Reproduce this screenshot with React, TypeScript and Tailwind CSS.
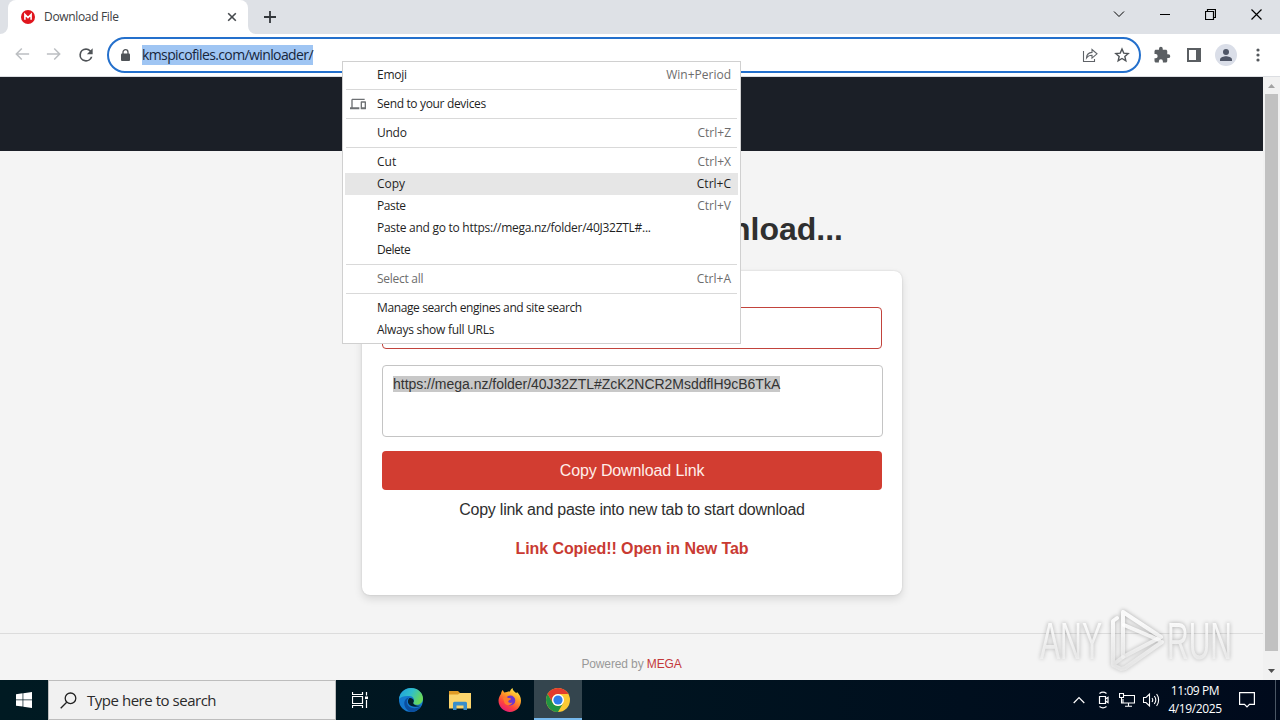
import type { ReactNode } from "react";
import { clsx } from "clsx";

type MenuEntry =
  | { type: "separator" }
  | {
      type: "item";
      label: string;
      shortcut?: string;
      active?: boolean;
      disabled?: boolean;
      icon?: ReactNode;
      tracking?: string;
    };

const menu: MenuEntry[] = [
  { type: "item", label: "Emoji", shortcut: "Win+Period" },
  { type: "separator" },
  { type: "item", label: "Send to your devices", icon: <DevicesIcon />, tracking: "tracking-[-0.34px]" },
  { type: "separator" },
  { type: "item", label: "Undo", shortcut: "Ctrl+Z" },
  { type: "separator" },
  { type: "item", label: "Cut", shortcut: "Ctrl+X", tracking: "tracking-normal" },
  { type: "item", label: "Copy", shortcut: "Ctrl+C", active: true, tracking: "tracking-normal" },
  { type: "item", label: "Paste", shortcut: "Ctrl+V", tracking: "tracking-[-0.4px]" },
  { type: "item", label: "Paste and go to https://mega.nz/folder/40J32ZTL#..." },
  { type: "item", label: "Delete", tracking: "tracking-[-0.5px]" },
  { type: "separator" },
  { type: "item", label: "Select all", shortcut: "Ctrl+A", disabled: true },
  { type: "separator" },
  { type: "item", label: "Manage search engines and site search", tracking: "tracking-[-0.39px]" },
  { type: "item", label: "Always show full URLs" },
];

function DevicesIcon() {
  return (
    <svg className="h-4 w-4" viewBox="0 0 24 24" fill="#6d7073">
      <path d="M4 6h18V4H4c-1.100 0-2 .9-2 2v11H0v3h14v-3H4V6zm19 2h-6c-.55 0-1 .45-1 1v10c0 .55.45 1 1 1h6c.55 0 1-.45 1-1V9c0-.55-.45-1-1-1zm-1 9h-4v-7h4v7z" />
    </svg>
  );
}

function TabStrip() {
  return (
    <div className="flex h-[34px] bg-[#dee1e6] pl-2">
      <div className="relative flex w-60 items-center rounded-t-lg bg-white pl-[13px] pr-[11px]">
        <svg className="absolute -left-2 bottom-0 h-2 w-2" viewBox="0 0 8 8">
          <path d="M8 0v8H0a8 8 0 0 0 8-8z" fill="#fff" />
        </svg>
        <svg className="absolute -right-2 bottom-0 h-2 w-2" viewBox="0 0 8 8">
          <path d="M0 0v8h8a8 8 0 0 1-8-8z" fill="#fff" />
        </svg>
        <svg className="h-[14px] w-[14px]" viewBox="0 0 14 14">
          <circle cx="7" cy="7" r="7" fill="#e0151d" />
          <path d="M3.900 9.800V4.400L7 7.500l3.100-3.100v5.400" fill="none" stroke="#fff" strokeWidth="1.600" />
        </svg>
        <span className="ml-[9px] flex-1 whitespace-nowrap text-xs tracking-[-0.33px] text-[#3c4043]">Download File</span>
        <svg className="h-[10px] w-[10px]" viewBox="0 0 10 10" stroke="#45494d" strokeWidth="1.600">
          <path d="M1.200 1.200l7.600 7.600M8.800 1.200L1.200 8.800" />
        </svg>
      </div>
      <div className="flex w-11 items-center justify-center">
        <svg className="h-3 w-3" viewBox="0 0 12 12" stroke="#33373b" strokeWidth="1.800">
          <path d="M6 0v12M0 6h12" />
        </svg>
      </div>
      <div className="ml-auto flex pb-[6px] text-black">
        <div className="flex w-[46px] items-center justify-center">
          <svg className="h-3 w-3" viewBox="0 0 12 12" fill="none" stroke="currentColor">
            <path d="M1 3.500l5 5 5-5" />
          </svg>
        </div>
        <div className="flex w-[46px] items-center justify-center">
          <div className="h-px w-[10px] bg-black" />
        </div>
        <div className="flex w-[46px] items-center justify-center">
          <svg className="mr-px h-[11px] w-[11px]" viewBox="0 0 11 11" fill="none" stroke="currentColor" strokeWidth="1.200">
            <path d="M.5 2.500h8v8h-8zM2.500 2.500v-2h8v8h-2" />
          </svg>
        </div>
        <div className="flex w-[46px] items-center justify-center">
          <svg className="mr-px h-[11px] w-[11px]" viewBox="0 0 11 11" stroke="currentColor" strokeWidth="1.200">
            <path d="M.5.500l10 10M10.500.500l-10 10" />
          </svg>
        </div>
      </div>
    </div>
  );
}

function Toolbar() {
  return (
    <div className="flex h-[43px] items-center border-b border-[#dcdee2] bg-white pl-[13px]">
      <div className="flex gap-[14px]">
        <svg className="h-[18px] w-[18px]" viewBox="0 0 24 24" fill="#bcbfc2">
          <path d="M21.500 11H6.830l5.590-5.590L11 4l-8 8 8 8 1.410-1.410L6.830 13H21.500v-2z" />
        </svg>
        <svg className="h-[18px] w-[18px]" viewBox="0 0 24 24" fill="#bcbfc2">
          <path d="M13 4l-1.410 1.410L17.170 11H2.500v2h14.670l-5.580 5.590L13 20l8-8z" />
        </svg>
        <svg className="h-5 w-5 -ml-px" viewBox="0 0 24 24" fill="#4f5357">
          <path d="M17.650 6.350A7.960 7.960 0 0 0 12 4a8 8 0 1 0 7.730 10h-2.080A6 6 0 1 1 12 6c1.660 0 3.140.69 4.220 1.780L13 11h7V4l-2.350 2.350z" />
        </svg>
      </div>
      <div className="ml-[11px] flex h-9 w-[1034px] items-center rounded-full border-2 border-[#2470cc] pl-[11px] pr-[9px]">
        <svg className="h-[13px] w-[11px]" viewBox="0 0 11 13">
          <rect x="1" y="4.500" width="9" height="7.500" rx="1" fill="#505458" />
          <path d="M3 5V3.200a2.500 2.500 0 0 1 5 0V5" fill="none" stroke="#505458" strokeWidth="1.300" />
        </svg>
        <span className="ml-[11px] h-5 whitespace-nowrap bg-[#9fc5f3] text-sm leading-5 tracking-[-0.61px] text-[#16263c]">
          kmspicofiles.com/winloader/
        </span>
        <div className="ml-auto flex items-center gap-4">
          <svg className="h-4 w-4" viewBox="0 0 16 16" fill="none" stroke="#5f6368" strokeWidth="1.100">
            <path d="M1.500 4v10.500h11V12M4.500 11c.2-3.600 2-5.400 5.500-5.600V2.500l5 4.300-5 4.300V8.300c-2.600 0-4.200.8-5.500 2.700z" />
          </svg>
          <svg className="h-4 w-4" viewBox="0 0 16 16" fill="none" stroke="#4f5357" strokeWidth="1.400">
            <path d="M8 2l1.750 4.100 4.450.4-3.370 2.930 1 4.370L8 11.480 4.170 13.800l1-4.370L1.800 6.500l4.450-.4z" />
          </svg>
        </div>
      </div>
      <div className="ml-3 flex items-center">
        <svg className="h-[18px] w-[18px]" viewBox="0 0 24 24" fill="#5a5e62">
          <path d="M20.500 11H19V7c0-1.100-.9-2-2-2h-4V3.500a2.500 2.500 0 0 0-5 0V5H4c-1.100 0-2 .9-2 2v3.800h1.500a2.700 2.700 0 0 1 0 5.400H2V20c0 1.100.9 2 2 2h3.800v-1.500a2.700 2.700 0 0 1 5.400 0V22H17c1.100 0 2-.9 2-2v-4h1.500a2.500 2.500 0 0 0 0-5z" />
        </svg>
        <svg className="ml-4 h-[14px] w-[14px]" viewBox="0 0 14 14">
          <path d="M0 0h14v14H0zM2 2v10h7V2z" fill="#5a5e62" fillRule="evenodd" />
        </svg>
        <div className="ml-[14px] h-[22px] w-[22px] rounded-full bg-[#dadee8]">
          <svg className="h-[22px] w-[22px]" viewBox="0 0 22 22" fill="#4e5566">
            <circle cx="11" cy="8" r="3" />
            <path d="M5 17v-1.500c0-2.200 4-3.300 6-3.300s6 1.100 6 3.300V17z" />
          </svg>
        </div>
        <svg className="ml-[19px] h-[14px] w-1" viewBox="0 0 4 14" fill="#55595d">
          <circle cx="2" cy="2" r="1.600" />
          <circle cx="2" cy="7" r="1.600" />
          <circle cx="2" cy="12" r="1.600" />
        </svg>
      </div>
    </div>
  );
}

function Page() {
  return (
    <div className="flex h-[603px] bg-[#f4f4f4]">
      <div className="flex w-[1263px] flex-col font-['Liberation_Sans',Arial,sans-serif]">
        <div className="h-[74px] bg-[#1b1f27]" />
        <h1 className="mt-[60px] pr-[420px] text-right text-[32px] font-bold leading-9 text-[#2f2f2f]">Download...</h1>
        <div className="ml-[362px] mt-[24px] flex h-[324px] w-[540px] flex-col rounded-lg bg-white px-5 pt-[36px] text-center shadow-[0_4px_8px_rgba(0,0,0,0.12),0_0_2px_rgba(0,0,0,0.15)]">
          <div className="h-[42px] rounded border border-[#c2433c]" />
          <div className="mt-4 h-[72px] w-[501px] rounded border border-[#c4c4c4] px-[10px] pt-[10px] text-left">
            <span className="block h-4 w-fit whitespace-nowrap bg-[#c8c8c8] text-sm leading-4 tracking-[-0.02px] text-[#333]">
              https://mega.nz/folder/40J32ZTL#ZcK2NCR2MsddflH9cB6TkA
            </span>
          </div>
          <div className="mt-[14px] h-[39px] rounded bg-[#d23d31] text-base leading-[39px] tracking-[-0.12px] text-[#ffeee9]">
            Copy Download Link
          </div>
          <p className="mt-2 text-base leading-6 tracking-[-0.24px] text-[#2f2f2f]">Copy link and paste into new tab to start download</p>
          <p className="mt-[15px] text-base font-bold leading-6 tracking-[-0.08px] text-[#c93a32]">Link Copied!! Open in New Tab</p>
        </div>
        <div className="mt-[38px] border-t border-[#dcdcdc] pt-[22px] text-center text-xs leading-4 tracking-[-0.12px] text-[#999]">
          Powered by <span className="text-[#c4383a]">MEGA</span>
        </div>
      </div>
      <div className="flex w-[17px] flex-col items-center bg-[#f1f1f1]">
        <svg className="h-[17px] w-[17px]" viewBox="0 0 17 17">
          <path d="M5 11l3.500-4L12 11z" fill="#a3a3a3" />
        </svg>
        <div className="h-[557px] w-[13px] bg-[#c1c1c1]" />
        <svg className="mt-auto h-[17px] w-[17px]" viewBox="0 0 17 17">
          <path d="M5 6l3.500 4L12 6z" fill="#505050" />
        </svg>
      </div>
    </div>
  );
}

function ContextMenu() {
  return (
    <div className="absolute left-[342px] top-[61px] h-[283px] w-[399px] border border-[#d0d0d0] bg-white px-[2px] py-[2px] text-xs text-[#1f1f1f]">
      {menu.map((entry, i) =>
        entry.type === "separator" ? (
          <div key={i} className="mx-[1px] h-[7px] pt-[3px]">
            <div className="h-px bg-[#d9d9d9]" />
          </div>
        ) : (
          <div key={i} className={clsx("flex h-[22px] items-center pr-[7px]", entry.active && "bg-[#e6e6e6]")}>
            <div className="w-8 pl-[5px]">{entry.icon}</div>
            <span
              className={clsx("flex-1 whitespace-nowrap", entry.tracking ?? "tracking-[-0.27px]", entry.disabled && "text-[#6d6d6d]")}
            >
              {entry.label}
            </span>
            <span className={entry.active ? "text-[#1f1f1f]" : "text-[#6d6d6d]"}>{entry.shortcut}</span>
          </div>
        ),
      )}
    </div>
  );
}

function Watermark() {
  return (
    <svg className="absolute left-[1030px] top-[602px] h-[78px] w-[230px] drop-shadow-[0_0_2px_rgba(0,0,0,0.35)]" viewBox="0 0 230 78">
      <defs>
        <linearGradient id="fade" gradientUnits="userSpaceOnUse" x1="0" y1="20" x2="0" y2="66">
          <stop offset="0" stopColor="#fff" stopOpacity="0.9" />
          <stop offset="1" stopColor="#f0f0f0" stopOpacity="0.6" />
        </linearGradient>
      </defs>
      <g fill="url(#fade)" fontFamily="Liberation Sans Narrow, Liberation Sans, sans-serif" fontSize="51">
        <text x="10" y="57" textLength="62" lengthAdjust="spacingAndGlyphs">ANY</text>
        <text x="137" y="57" textLength="65" lengthAdjust="spacingAndGlyphs">RUN</text>
      </g>
      <g fill="none" stroke="url(#fade)" strokeWidth="4" strokeLinejoin="round" strokeLinecap="round">
        <path d="M93 10v45l38-20z" />
        <path d="M87 16l-4 3v44l8 4 4-1 37-26M84 62l9-7M94 23l35 15" />
      </g>
    </svg>
  );
}

function EdgeIcon() {
  return (
    <svg className="h-6 w-6" viewBox="0 0 24 24">
      <defs>
        <linearGradient id="edgeTop" x1="0" y1="0" x2="1" y2="0.4">
          <stop offset="0" stopColor="#1e9ddd" />
          <stop offset="0.55" stopColor="#30bfca" />
          <stop offset="1" stopColor="#68d85a" />
        </linearGradient>
      </defs>
      <circle cx="12" cy="12" r="12" fill="#1479ce" />
      <path d="M0 11C1 4 6 0 12 0c7 0 12 5 12 10.500 0 4-3 6.300-6.500 6.300-3 0-4-1.300-3.200-2.300 2.200-3-.3-6.500-4-6.500C6 7.500 2 8.500 0 11z" fill="url(#edgeTop)" />
      <path d="M10.500 9.500C7.500 11 7 14.500 9 17.500c3 3.500 8.500 3.500 13 .8-2.300 4-6.500 6-10.500 5.700C6.500 22 4.500 17 5.500 13.500c.8-2.700 3-4 5-4z" fill="#0b4fa0" />
      <path d="M10.500 10c-1.700 1.200-2.200 4-.8 6 2.300 3.300 8 3.300 12.800 1.500-4.500 1.200-8.500-.8-8.300-2.700 1.600-2 .3-4.800-3.700-4.800z" fill="#03202c" />
    </svg>
  );
}

function FirefoxIcon() {
  return (
    <svg className="h-6 w-6" viewBox="0 0 24 24">
      <defs>
        <linearGradient id="fox" x1="0.8" y1="0" x2="0.25" y2="1">
          <stop offset="0" stopColor="#fff04a" />
          <stop offset="0.4" stopColor="#ff9a25" />
          <stop offset="0.7" stopColor="#ff443d" />
          <stop offset="1" stopColor="#e2177d" />
        </linearGradient>
      </defs>
      <path d="M3 6c.2-1.700.8-3 1.700-4l1.500 2.500L9 4c1-.4 2-.5 3-.4C12.300 2 13.300.8 14.500 0c.3 2.500 2 3.500 3.800 5.200l.7-1.200c2.700 2.300 4 5.500 4 8.800C23 19 18 24 12 24S.5 19 .5 12.800C.5 10.300 1.500 7.800 3 6z" fill="url(#fox)" />
      <circle cx="12.300" cy="12.500" r="5" fill="#6d35cf" />
      <path d="M5 10c2.500-1.800 4-.8 5.500 0 1.400.2 2.500 0 2.500 1-.4 1.200-2.400 1-2.700 2.300-.1 1.300 1.600 2 4.200 1.300-2 3.400-6.500 3.400-8 .5z" fill="#ff7b2d" />
    </svg>
  );
}

function ChromeIcon() {
  return (
    <svg className="h-6 w-6" viewBox="0 0 24 24">
      <circle cx="12" cy="12" r="12" fill="#fcc934" />
      <path d="M1.610 6A12 12 0 0 1 22.390 6H12a6 6 0 0 0-5.200 9z" fill="#e33b2e" />
      <path d="M1.610 6A12 12 0 0 0 12 24l5.200-9A6 6 0 0 1 6.800 15z" fill="#229342" />
      <circle cx="12" cy="12" r="6" fill="#fff" />
      <circle cx="12" cy="12" r="4.600" fill="#2f7de9" />
    </svg>
  );
}

function Taskbar() {
  return (
    <div className="flex h-10 bg-linear-to-r from-[#001a22] via-[#001420] to-[#000a1c] text-white">
      <div className="flex w-12 items-center justify-center">
        <svg className="h-4 w-4" viewBox="0 0 16 16" fill="#fff">
          <path d="M0 2.200l6.600-.9v6.200H0zM7.300 1.200L16 0v7.500H7.300zM0 8.300h6.600v6.300L0 13.700zM7.300 8.300H16V16l-8.700-1.300z" />
        </svg>
      </div>
      <div className="flex w-72 items-center border border-[#bdbdbd] bg-[#f1f1f1] pl-[11px] text-[#2b2b2b]">
        <svg className="h-[17px] w-[17px]" viewBox="0 0 17 17" fill="none" stroke="#222" strokeWidth="1.300">
          <circle cx="10.500" cy="6.300" r="5.300" />
          <path d="M6.700 10.200L.7 16.300" />
        </svg>
        <span className="ml-[10px] whitespace-nowrap text-[15px] tracking-[-0.47px]">Type here to search</span>
      </div>
      <div className="flex w-12 items-center justify-center">
        <svg className="h-4 w-4" viewBox="0 0 16 16" fill="none" stroke="#fff" strokeWidth="1.200">
          <path d="M.5 0v2.500h10V0M.5 16v-2.500h10V16M.5 4.500h10v7H.5zM14.500 0v3.500M14.500 8v8" />
          <path d="M13 4.500h3v2.600h-3z" fill="#fff" stroke="none" />
        </svg>
      </div>
      <div className="ml-[3px] flex w-12 items-center justify-center">
        <EdgeIcon />
      </div>
      <div className="flex w-[50px] items-center justify-center">
        <svg className="h-5 w-[22px]" viewBox="0 0 22 20">
          <path d="M0 1h9l2 2v3H0z" fill="#e09b25" />
          <path d="M0 4.500h9L11 3h11v15.500H0z" fill="#fcd56c" />
          <path d="M4 20v-6.500c0-1 .6-1.700 1.500-1.700h11c1 0 1.500.7 1.500 1.700V20h-3.500v-4.500h-7V20z" fill="#398ecb" />
        </svg>
      </div>
      <div className="flex w-[49px] items-center justify-center pb-px">
        <FirefoxIcon />
      </div>
      <div className="flex w-12 items-center justify-center border-b-2 border-[#76b9ed] bg-[#34454e] pt-[2px]">
        <ChromeIcon />
      </div>
      <div className="ml-auto flex items-center">
        <svg className="h-2 w-3" viewBox="0 0 12 8" fill="none" stroke="#fff" strokeWidth="1.200">
          <path d="M.7 7L6 1.500 11.300 7" />
        </svg>
        <svg className="ml-3 h-[18px] w-3" viewBox="0 0 12 18" fill="none" stroke="#fff" strokeWidth="1.200">
          <path d="M2.500 5.500h6v7h-6zM8.500 8l2.500-1.700v5.400L8.500 10M2.500 2.500c2-1.500 5-1.500 7 0M2.500 15.500c2 1.500 5 1.500 7 0" />
        </svg>
        <svg className="ml-[10px] h-[14px] w-4" viewBox="0 0 16 14" fill="none" stroke="#fff" strokeWidth="1.100">
          <path d="M5 2.500h10.500v7.500H4V6M9.500 10v3M6 13.300h7M.5.500h4v4h-4zM2.500 4.500V10H4" />
        </svg>
        <svg className="ml-2 h-4 w-[17px]" viewBox="0 0 17 16" fill="none" stroke="#fff" strokeWidth="1.100">
          <path d="M.5 5.500h2.500l3.500-3.500v12L3 10.500H.5zM9 6c.9 1.200.9 2.800 0 4M11.300 4c1.800 2.400 1.800 5.600 0 8M13.600 2c2.700 3.500 2.700 8.500 0 12" />
        </svg>
        <div className="ml-2 w-[54px] whitespace-nowrap text-center text-xs leading-[18px] tracking-[-0.4px]">
          <div>11:09 PM</div>
          <div>4/19/2025</div>
        </div>
        <svg className="ml-[17px] h-4 w-4" viewBox="0 0 16 16" fill="none" stroke="#fff" strokeWidth="1.200">
          <path d="M.6.600h14.800v11.800H10.500L8 15l-2.500-2.600H.6z" />
        </svg>
        <div className="ml-[20px] mr-1 h-10 w-px bg-[#4a5664]" />
      </div>
    </div>
  );
}

export default function App() {
  return (
    <div className="relative flex h-[720px] w-[1280px] flex-col overflow-hidden font-['Open_Sans','Noto_Sans',sans-serif]">
      <TabStrip />
      <Toolbar />
      <Page />
      <Taskbar />
      <Watermark />
      <ContextMenu />
    </div>
  );
}
